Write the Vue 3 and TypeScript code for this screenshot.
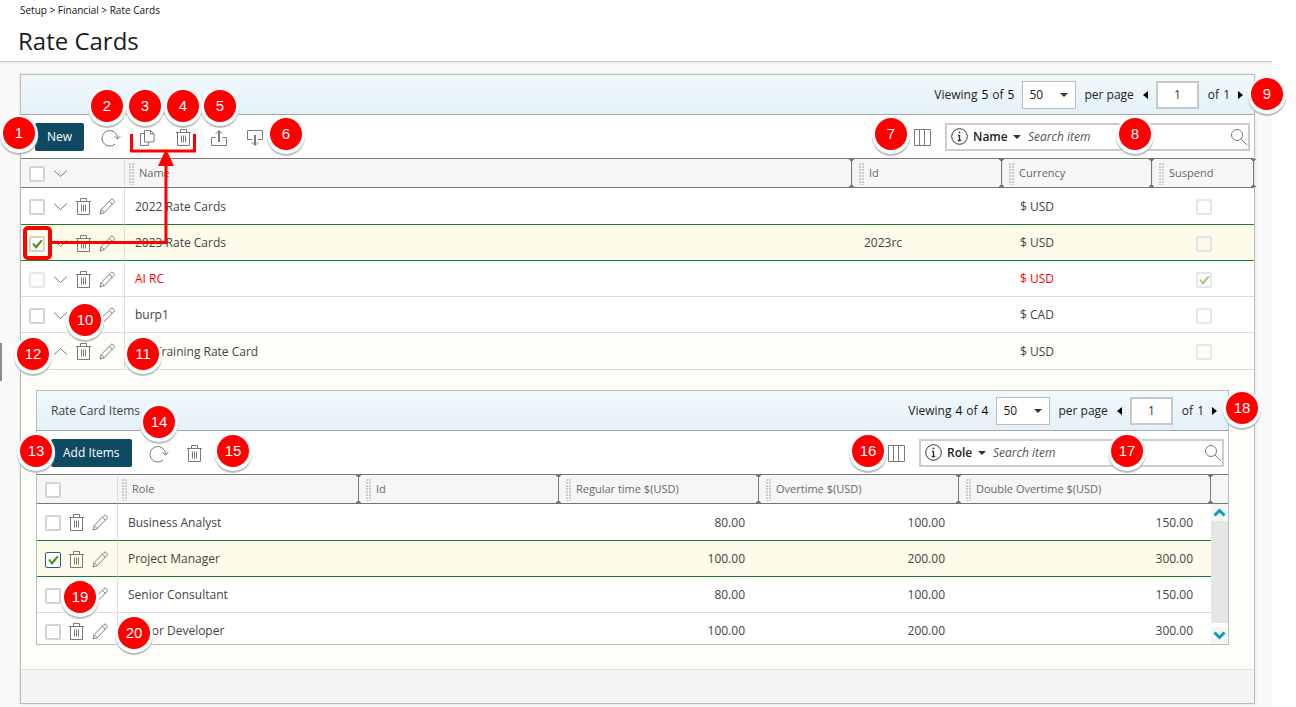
<script setup lang="ts">
import { ref } from 'vue'

interface RateCard {
  name: string
  id: string
  currency: string
  suspended: boolean
  selected: boolean
  expanded: boolean
}

interface RateItem {
  role: string
  id: string
  regular: string
  overtime: string
  double: string
  selected: boolean
}

interface Pin {
  n: number
  x: number
  y: number
  side: 'left' | 'right'
}

const cards = ref<RateCard[]>([
  { name: '2022 Rate Cards', id: '', currency: '$ USD', suspended: false, selected: false, expanded: false },
  { name: '2023 Rate Cards', id: '2023rc', currency: '$ USD', suspended: false, selected: true, expanded: false },
  { name: 'AI RC', id: '', currency: '$ USD', suspended: true, selected: false, expanded: false },
  { name: 'burp1', id: '', currency: '$ CAD', suspended: false, selected: false, expanded: false },
  { name: 'My Training Rate Card', id: '', currency: '$ USD', suspended: false, selected: false, expanded: true },
])

const items = ref<RateItem[]>([
  { role: 'Business Analyst', id: '', regular: '80.00', overtime: '100.00', double: '150.00', selected: false },
  { role: 'Project Manager', id: '', regular: '100.00', overtime: '200.00', double: '300.00', selected: true },
  { role: 'Senior Consultant', id: '', regular: '80.00', overtime: '100.00', double: '150.00', selected: false },
  { role: 'Senior Developer', id: '', regular: '100.00', overtime: '200.00', double: '300.00', selected: false },
])

// Centre of each callout, measured from the named side of the page.
const pins: Pin[] = [
  { n: 1, x: 19, y: 133, side: 'left' },
  { n: 2, x: 107, y: 106, side: 'left' },
  { n: 3, x: 145, y: 106, side: 'left' },
  { n: 4, x: 183, y: 106, side: 'left' },
  { n: 5, x: 220, y: 106, side: 'left' },
  { n: 6, x: 286, y: 134, side: 'left' },
  { n: 7, x: 405, y: 134, side: 'right' },
  { n: 8, x: 161, y: 134, side: 'right' },
  { n: 9, x: 29, y: 94, side: 'right' },
  { n: 10, x: 85, y: 320, side: 'left' },
  { n: 11, x: 143, y: 354, side: 'left' },
  { n: 12, x: 33, y: 354, side: 'left' },
  { n: 13, x: 36, y: 451, side: 'left' },
  { n: 14, x: 159, y: 422, side: 'left' },
  { n: 15, x: 233, y: 451, side: 'left' },
  { n: 16, x: 428, y: 451, side: 'right' },
  { n: 17, x: 169, y: 451, side: 'right' },
  { n: 18, x: 54, y: 408, side: 'right' },
  { n: 19, x: 80, y: 597, side: 'left' },
  { n: 20, x: 134, y: 633, side: 'left' },
]

function pinStyle(pin: Pin): Record<string, string> {
  return { top: `${pin.y - 16}px`, [pin.side]: `${pin.x - 16}px` }
}
</script>

<template>
  <div class="page">
    <svg class="defs" aria-hidden="true">
      <symbol id="i-refresh" viewBox="0 0 20 18">
        <path d="M16.6 9.2A7.8 7.8 0 1 0 14 15.1" />
        <path d="M13.4 7.4l3.3 2.7 2.7-3.2" />
      </symbol>
      <symbol id="i-copy" viewBox="0 0 18 18">
        <path d="M6.5 1.5h6l3.5 3.5v8H6.500zM12.500 1.500V5H16" />
        <path d="M6.500 4.500h-4v12h8V13" />
      </symbol>
      <symbol id="i-trash" viewBox="0 0 15 17">
        <path d="M0 3.500h15M4.500 3V.5h6V3M1.500 3.500v13h12v-13M5.500 6.500v7M7.500 6.500v7M9.500 6.500v7" />
      </symbol>
      <symbol id="i-export" viewBox="0 0 18 18">
        <path d="M5.500 8.500h-4v8h15v-8h-4" />
        <path d="M9 13V2" stroke-width="2" />
        <path d="M5.500 5L9 1.500 12.500 5" />
      </symbol>
      <symbol id="i-import" viewBox="0 0 18 18">
        <path d="M6.500 10.500h-5v-9h15v9h-5" />
        <path d="M9 6v10" stroke-width="2" />
        <path d="M5.500 13L9 16.500 12.500 13" />
      </symbol>
      <symbol id="i-columns" viewBox="0 0 17 17">
        <path d="M.5.5h16v16H.5zM5.500.5v16M10.500.5v16" />
      </symbol>
      <symbol id="i-down" viewBox="0 0 15 9"><path d="M1 1.500l6.500 6L14 1.500" /></symbol>
      <symbol id="i-up" viewBox="0 0 15 9"><path d="M1 7.500l6.500-6 6.500 6" /></symbol>
      <symbol id="i-pencil" viewBox="0 0 16 17">
        <path d="M1 16l1.200-4.500L12 1.500q.9-.9 1.800 0l1.200 1.200q.9.9 0 1.800L5.200 14.600zM10.300 3.300l3 3M2.300 11.700l2.800 2.800" />
      </symbol>
      <symbol id="i-info" viewBox="0 0 17 17">
        <circle cx="8.500" cy="8.500" r="7.800" />
        <path d="M8.500 7v5.500M7 7.500h1.500M6.800 12.500h3.400" stroke-width="1.400" />
        <circle cx="8.500" cy="4.500" r=".6" stroke-width="1" />
      </symbol>
      <symbol id="i-search" viewBox="0 0 18 18">
        <circle cx="7" cy="7" r="5.500" />
        <path d="M11 11l6 6" />
      </symbol>
      <symbol id="i-scroll" viewBox="0 0 17 17">
        <path d="M3.500 11.500l5-5 5 5" stroke="#069fc0" stroke-width="3" />
      </symbol>
    </svg>

    <header class="head">
      <nav class="crumbs" aria-label="Breadcrumb">
        <a href="#">Setup</a> &gt; <a href="#">Financial</a> &gt; <a href="#">Rate Cards</a>
      </nav>
      <h1>Rate Cards</h1>
    </header>

    <main class="content">
      <section class="panel">
        <div class="bar">
          <div class="pager">
            <span class="count"><span>Viewing</span><b>5</b><span>of</span><b>5</b></span>
            <span class="pick">
              <select aria-label="Rate cards per page"><option>50</option></select>
              <svg class="caret" viewBox="0 0 8 4"><path d="M0 0h8L4 4z" /></svg>
            </span>
            <span class="per">per page</span>
            <button class="tri" aria-label="Previous page"><svg viewBox="0 0 5 8"><path d="M5 0v8L0 4z" /></svg></button>
            <input class="num" type="text" value="1" aria-label="Page number" />
            <span class="count of"><span>of</span><span>1</span></span>
            <button class="tri" aria-label="Next page"><svg viewBox="0 0 5 8"><path d="M0 0v8l5-4z" /></svg></button>
          </div>
        </div>
        <div class="tools">
          <button class="primary">New</button>
          <button class="ico" aria-label="Refresh"><svg class="wide"><use href="#i-refresh" /></svg></button>
          <button class="ico" aria-label="Copy"><svg><use href="#i-copy" /></svg></button>
          <button class="ico" aria-label="Delete"><svg class="bin"><use href="#i-trash" /></svg></button>
          <button class="ico" aria-label="Export"><svg><use href="#i-export" /></svg></button>
          <button class="ico" aria-label="Import"><svg><use href="#i-import" /></svg></button>
          <span class="grow"></span>
          <button class="cols" aria-label="Columns"><svg><use href="#i-columns" /></svg></button>
          <div class="search">
            <svg class="info"><use href="#i-info" /></svg>
            <select aria-label="Search field"><option>Name</option></select>
            <svg class="caret" viewBox="0 0 8 4"><path d="M0 0h8L4 4z" /></svg>
            <input type="text" placeholder="Search item" aria-label="Search rate cards" />
            <button aria-label="Search"><svg><use href="#i-search" /></svg></button>
          </div>
        </div>

        <table class="grid outer">
          <colgroup>
            <col class="c-act" /><col /><col class="c-mid" /><col class="c-mid" /><col class="c-sus" />
          </colgroup>
          <thead>
            <tr>
              <th class="lead">
                <div class="acts">
                  <input type="checkbox" aria-label="Select all rate cards" />
                  <button aria-label="Expand all"><svg class="chev"><use href="#i-down" /></svg></button>
                </div>
              </th>
              <th class="first sep">Name</th>
              <th class="sep">Id</th>
              <th class="sep">Currency</th>
              <th class="sep">Suspend</th>
            </tr>
          </thead>
          <tbody>
            <tr
              v-for="card in cards"
              :key="card.name"
              :class="{ selected: card.selected, expanded: card.expanded, off: card.suspended }"
            >
              <td class="lead">
                <div class="acts">
                  <input v-model="card.selected" type="checkbox" :disabled="card.suspended" :aria-label="'Select ' + card.name" />
                  <button :aria-label="'Expand ' + card.name">
                    <svg class="chev"><use :href="card.expanded ? '#i-up' : '#i-down'" /></svg>
                  </button>
                  <button :aria-label="'Delete ' + card.name"><svg class="bin"><use href="#i-trash" /></svg></button>
                  <button :aria-label="'Edit ' + card.name"><svg class="pen"><use href="#i-pencil" /></svg></button>
                </div>
              </td>
              <td>{{ card.name }}</td>
              <td class="idc">{{ card.id }}</td>
              <td class="cur">{{ card.currency }}</td>
              <td class="sus">
                <input v-model="card.suspended" type="checkbox" disabled :aria-label="'Suspend ' + card.name" />
              </td>
            </tr>
          </tbody>
        </table>

        <div class="detail">
          <section class="panel nested">
            <div class="bar">
              <h2>Rate Card Items</h2>
              <div class="pager">
                <span class="count"><span>Viewing</span><b>4</b><span>of</span><b>4</b></span>
                <span class="pick">
                  <select aria-label="Items per page"><option>50</option></select>
                  <svg class="caret" viewBox="0 0 8 4"><path d="M0 0h8L4 4z" /></svg>
                </span>
                <span class="per">per page</span>
                <button class="tri" aria-label="Previous page"><svg viewBox="0 0 5 8"><path d="M5 0v8L0 4z" /></svg></button>
                <input class="num" type="text" value="1" aria-label="Page number" />
                <span class="count of"><span>of</span><span>1</span></span>
                <button class="tri" aria-label="Next page"><svg viewBox="0 0 5 8"><path d="M0 0v8l5-4z" /></svg></button>
              </div>
            </div>
            <div class="tools">
              <button class="primary">Add Items</button>
              <button class="ico" aria-label="Refresh"><svg class="wide"><use href="#i-refresh" /></svg></button>
              <button class="ico" aria-label="Delete"><svg class="bin"><use href="#i-trash" /></svg></button>
              <span class="grow"></span>
              <button class="cols" aria-label="Columns"><svg><use href="#i-columns" /></svg></button>
              <div class="search">
                <svg class="info"><use href="#i-info" /></svg>
                <select aria-label="Search field"><option>Role</option></select>
                <svg class="caret" viewBox="0 0 8 4"><path d="M0 0h8L4 4z" /></svg>
                <input type="text" placeholder="Search item" aria-label="Search items" />
                <button aria-label="Search"><svg><use href="#i-search" /></svg></button>
              </div>
            </div>

            <div class="scroller">
              <table class="grid">
                <colgroup>
                  <col class="c-act" /><col /><col class="c-mid" /><col class="c-mid" /><col class="c-mid" /><col class="c-dbl" />
                </colgroup>
                <thead>
                  <tr>
                    <th class="lead">
                      <div class="acts"><input type="checkbox" aria-label="Select all items" /></div>
                    </th>
                    <th class="first sep">Role</th>
                    <th class="sep">Id</th>
                    <th class="sep">Regular time $(USD)</th>
                    <th class="sep">Overtime $(USD)</th>
                    <th class="sep">Double Overtime $(USD)</th>
                  </tr>
                </thead>
                <tbody>
                  <tr v-for="item in items" :key="item.role" :class="{ selected: item.selected }">
                    <td class="lead">
                      <div class="acts">
                        <input v-model="item.selected" type="checkbox" :aria-label="'Select ' + item.role" />
                        <button :aria-label="'Delete ' + item.role"><svg class="bin"><use href="#i-trash" /></svg></button>
                        <button :aria-label="'Edit ' + item.role"><svg class="pen"><use href="#i-pencil" /></svg></button>
                      </div>
                    </td>
                    <td>{{ item.role }}</td>
                    <td>{{ item.id }}</td>
                    <td class="amt">{{ item.regular }}</td>
                    <td class="amt">{{ item.overtime }}</td>
                    <td class="amt last">{{ item.double }}</td>
                  </tr>
                </tbody>
              </table>
              <div class="rail">
                <div class="corner"></div>
                <button aria-label="Scroll up"><svg><use href="#i-scroll" /></svg></button>
                <div class="thumb"></div>
                <button class="dn" aria-label="Scroll down"><svg><use href="#i-scroll" /></svg></button>
              </div>
            </div>
          </section>
        </div>
        <footer class="foot"></footer>
      </section>
    </main>

    <div class="handle"></div>

    <svg class="arrow" width="200" height="270" aria-hidden="true">
      <rect x="25" y="228" width="25" height="30" rx="3" stroke-width="4" />
      <path d="M52 242.500H166V162M131.500 134v17h63v-17" stroke-width="3" />
      <path d="M166 149l8 17h-16z" class="tip" />
    </svg>
    <span v-for="pin in pins" :key="pin.n" class="pin" :style="pinStyle(pin)">{{ pin.n }}</span>
  </div>
</template>

<style>
body {
  margin: 0;
  background: #fff;
}
</style>

<style scoped>
.page {
  position: relative;
  display: flex;
  flex-direction: column;
  min-height: 100vh;
  padding-right: 24px;
  box-sizing: border-box;
  overflow: hidden;
  font-family: "Open Sans", "Noto Sans", sans-serif;
  font-size: 12px;
  line-height: 16px;
  color: #444;
}
.defs {
  position: absolute;
  width: 0;
  height: 0;
}
svg {
  display: block;
  flex: none;
  width: 18px;
  height: 18px;
  fill: none;
  stroke: #7a7a7a;
  stroke-width: 1;
}
button {
  display: block;
  flex: none;
  padding: 0;
  border: 0;
  background: none;
  font: inherit;
  color: inherit;
}
.head {
  padding: 3px 18px 4px;
  border-bottom: 1px solid #c8c8c8;
  background: #fff;
}
.crumbs {
  padding-left: 2px;
  font-size: 10px;
  line-height: 14px;
  color: #111;
}
.crumbs a {
  color: inherit;
  text-decoration: none;
}
h1 {
  margin: 8px 0 0;
  font-size: 24px;
  line-height: 32px;
  font-weight: 400;
  color: #1c1c1c;
}
.content {
  flex: 1;
  padding: 12px 17px 3px 20px;
  background: #fafafa;
  box-shadow: inset 0 2px 2px -1px #e4e4e4;
}
.panel {
  border: 1px solid #bbb;
  background: #fff;
  box-shadow: 0 0 3px #ddd;
}
.bar {
  display: flex;
  align-items: center;
  height: 39px;
  padding: 0 11px 0 14px;
  border-bottom: 1px solid #a5a5a5;
  background: linear-gradient(#f1f9fc, #e3f1f8);
}
h2 {
  margin: 0;
  font-size: 12px;
  line-height: 16px;
  font-weight: 400;
  color: #444;
}
.pager {
  display: flex;
  align-items: center;
  margin-left: auto;
  color: #222;
}
.count {
  display: flex;
  gap: 4px;
}
.count b {
  font-weight: 400;
  color: #000;
}
.pick {
  display: flex;
  align-items: center;
  width: 54px;
  height: 28px;
  margin: 0 8px;
  padding-right: 7px;
  border: 1px solid #bbb;
  box-sizing: border-box;
  background: #fff;
}
.pick select,
.search select {
  appearance: none;
  flex: 1;
  min-width: 0;
  padding: 0 0 0 6px;
  border: 0;
  background: none;
  font: inherit;
  color: #222;
}
.caret {
  width: 8px;
  height: 4px;
  fill: #333;
  stroke: none;
}
.per {
  margin-right: 9px;
}
.tri svg {
  width: 5px;
  height: 8px;
  fill: #000;
  stroke: none;
}
.num {
  width: 43px;
  height: 28px;
  margin: 0 9px 0 8px;
  padding: 0;
  box-sizing: border-box;
  border: 2px solid #c8c8c8;
  background: #fff;
  font: inherit;
  text-align: center;
  color: #333;
}
.of {
  margin-right: 8px;
}
.tools {
  display: flex;
  align-items: center;
  gap: 18px;
  height: 43px;
  padding: 0 4px 0 14px;
}
.primary {
  height: 28px;
  padding: 0 12px;
  border-radius: 2px;
  background: #0e4a62;
  color: #fff;
}
.ico {
  display: flex;
  justify-content: center;
  width: 18px;
  padding-top: 2px;
}
.wide {
  width: 20px;
}
.bin {
  width: 15px;
  height: 17px;
}
.pen {
  width: 16px;
  height: 17px;
}
.chev {
  width: 15px;
  height: 9px;
}
.grow {
  flex: 1;
}
.cols {
  padding-top: 2px;
}
.cols svg {
  width: 17px;
  height: 17px;
}
.search {
  display: flex;
  align-items: center;
  width: 305px;
  height: 28px;
  margin-left: -4px;
  padding: 0 0 0 4px;
  box-sizing: border-box;
  border: 2px solid #ccc;
  background: #fff;
}
.search select {
  flex: none;
  padding: 0 5px;
  font-weight: 600;
}
.search input {
  flex: 1;
  min-width: 0;
  height: 22px;
  padding: 0 7px;
  border: 0;
  background: none;
  outline: 0;
  font: inherit;
  font-style: italic;
}
.search input::placeholder {
  color: #555;
  opacity: 1;
}
.info {
  width: 17px;
  height: 17px;
  stroke: #333;
}
.grid {
  width: 100%;
  table-layout: fixed;
  border-collapse: separate;
  border-spacing: 0;
}
.c-act {
  width: 81px;
}
.outer .c-act {
  width: 104px;
}
.c-mid {
  width: 200px;
}
.outer .c-mid {
  width: 150px;
}
.c-sus {
  width: 102px;
}
.c-dbl {
  width: 252px;
}
th {
  position: relative;
  height: 28px;
  padding: 0 0 0 17px;
  border-top: 1px solid #777;
  border-bottom: 1px solid #777;
  background: #f6f6f6;
  font-size: 11px;
  font-weight: 400;
  text-align: left;
  color: #666;
}
.first {
  padding-left: 14px;
}
/* drag grip: two columns of dots */
.sep::before {
  content: "";
  position: absolute;
  left: 7px;
  top: 3px;
  width: 5px;
  height: 23px;
  background:
    repeating-linear-gradient(#f6f6f6 0 1px, transparent 1px 3px),
    repeating-linear-gradient(90deg, #ccc 0 2px, transparent 2px 3px);
}
.first::before {
  left: 4px;
}
/* resize bar with a cap at each end */
.sep::after {
  content: "";
  position: absolute;
  z-index: 1;
  right: -2px;
  top: 0;
  width: 5px;
  height: 28px;
  background:
    linear-gradient(#777, #777) center top / 5px 1px no-repeat,
    linear-gradient(#777, #777) center bottom / 5px 1px no-repeat,
    linear-gradient(#777, #777) center top 1px / 3px 1px no-repeat,
    linear-gradient(#777, #777) center bottom 1px / 3px 1px no-repeat,
    linear-gradient(#8f6f8f, #8f6f8f) center / 1px 28px no-repeat;
}
.outer .sep::after {
  background:
    linear-gradient(#777, #777) center top / 5px 1px no-repeat,
    linear-gradient(#777, #777) center bottom / 5px 1px no-repeat,
    linear-gradient(#777, #777) center top 1px / 3px 1px no-repeat,
    linear-gradient(#777, #777) center bottom 1px / 3px 1px no-repeat,
    linear-gradient(90deg, #7a7a6c 0 1px, #d4f2f0 1px 2px) 2px 0 / 2px 28px no-repeat;
}
td {
  height: 34px;
  padding: 1px 0 0 10px;
  border-bottom: 1px solid #ddd;
  white-space: nowrap;
}
tbody tr:first-child td {
  height: 35px;
}
.lead {
  padding-left: 8px;
  border-right: 1px solid #ddd;
}
.acts {
  display: flex;
  align-items: center;
  gap: 8px;
}
input[type="checkbox"] {
  appearance: none;
  display: block;
  flex: none;
  width: 16px;
  height: 16px;
  margin: 1px 0 0;
  border: 2px solid #d3d3d3;
  border-radius: 2px;
  background: #fff;
}
input[type="checkbox"]:disabled {
  border-color: #e6e6e4;
  background: #fdfdfb;
}
input[type="checkbox"]:checked::before {
  content: "";
  display: block;
  width: 12px;
  height: 12px;
  background: #4b8f1c;
  clip-path: polygon(10% 55%, 24% 46%, 40% 66%, 84% 18%, 98% 28%, 42% 96%);
}
input[type="checkbox"]:disabled:checked::before {
  background: #a5cb88;
}
.nested td input[type="checkbox"]:checked {
  border: 1px solid #1c5d9f;
  padding: 1px;
  box-sizing: border-box;
}
.idc {
  padding-left: 12px;
}
.cur {
  padding-left: 18px;
}
.sus input[type="checkbox"] {
  margin: 1px auto 0 34px;
}
tr:has(+ .selected) td,
.selected td {
  border-bottom-color: #1d7d32;
}
.selected td {
  background: #fdfbe9;
}
.selected .sus input {
  background: #fdfbf0;
}
.off td {
  color: #f00;
}
.expanded td {
  height: 35px;
  background: #fefef8;
}
.detail {
  padding: 20px 25px 24px 15px;
  border-bottom: 1px solid #ddd;
  background: #fefef8;
}
.nested {
  box-shadow: none;
}
.scroller {
  display: grid;
  grid-template-columns: minmax(0, 1fr) 17px;
  height: 170px;
  overflow: hidden;
}
.amt {
  padding-left: 0;
  padding-right: 14px;
  text-align: right;
}
.last {
  padding-right: 18px;
}
.rail {
  display: flex;
  flex-direction: column;
  height: 170px;
}
.corner {
  height: 28px;
  border-top: 1px solid #777;
  border-bottom: 1px solid #777;
  background: #f6f6f6;
}
.rail button {
  height: 17px;
  background: #f5f5f5;
}
.rail svg {
  width: 17px;
  height: 17px;
}
.dn svg {
  transform: rotate(180deg);
}
.thumb {
  flex: 1;
  margin-bottom: 4px;
  background: #e6e6e6;
}
.foot {
  height: 33px;
  background: #f5f5f5;
}
.handle {
  position: absolute;
  left: 0;
  top: 343px;
  width: 2px;
  height: 38px;
  background: #858b96;
}
.arrow {
  position: absolute;
  z-index: 2;
  left: 0;
  top: 0;
  width: 200px;
  height: 270px;
  stroke: #f00;
  pointer-events: none;
}
.tip {
  fill: #f00;
  stroke: none;
}
.pin {
  position: absolute;
  z-index: 3;
  width: 32px;
  height: 32px;
  border-radius: 50%;
  background: #f00;
  box-shadow: 0 1px 0 3px #fff, 0 3px 1px 3px #bbb;
  font-family: "Liberation Sans", Arial, sans-serif;
  font-size: 15px;
  line-height: 32px;
  text-align: center;
  color: #fff;
}
</style>
